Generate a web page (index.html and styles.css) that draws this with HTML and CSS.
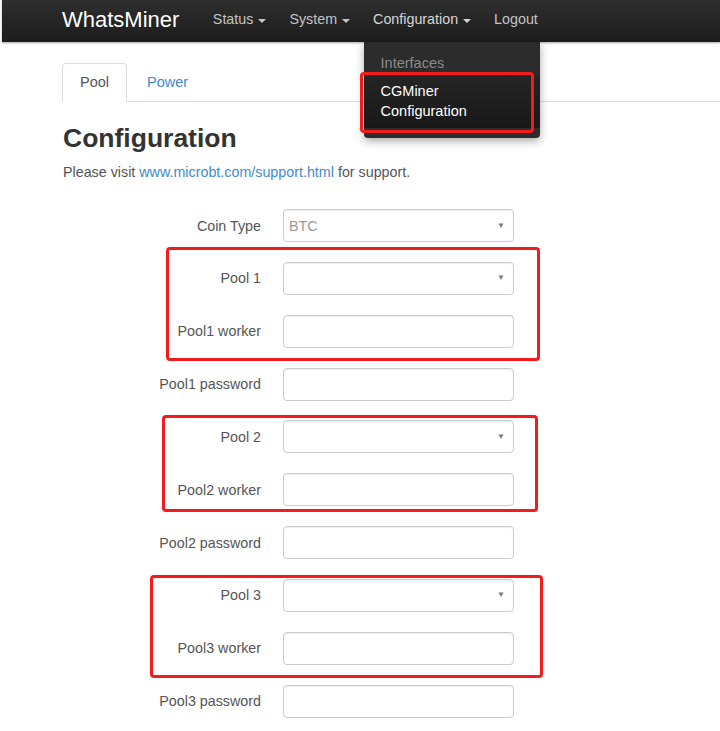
FILE: index.html
```html
<!DOCTYPE html>
<html>
<head>
<meta charset="utf-8">
<title>WhatsMiner - Configuration</title>
<link rel="stylesheet" href="styles.css">
</head>
<body>
<div class="page">
  <header class="navbar">
    <span class="brand">WhatsMiner</span>
    <ul class="nav">
      <li class="nav-item">Status<span class="caret"></span></li>
      <li class="nav-item">System<span class="caret"></span></li>
      <li class="nav-item open">Configuration<span class="caret"></span>
        <div class="dropdown">
          <div class="dd-item dd-muted">Interfaces</div>
          <div class="dd-item dd-active">CGMiner<br>Configuration</div>
        </div>
      </li>
      <li class="nav-item">Logout</li>
    </ul>
  </header>

  <main class="content">
    <ul class="tabs">
      <li class="tab active">Pool</li>
      <li class="tab">Power</li>
    </ul>

    <h1 class="title">Configuration</h1>
    <p class="lead">Please visit <a class="link" href="#">www.microbt.com/support.html</a> for support.</p>

    <form class="form">
      <label class="label">Coin Type</label>
      <div class="field select"><span class="value">BTC</span><span class="arrow">▼</span></div>

      <label class="label">Pool 1</label>
      <div class="field select"><span class="value"></span><span class="arrow">▼</span></div>
      <label class="label">Pool1 worker</label>
      <div class="field"></div>
      <label class="label">Pool1 password</label>
      <div class="field"></div>

      <label class="label">Pool 2</label>
      <div class="field select"><span class="value"></span><span class="arrow">▼</span></div>
      <label class="label">Pool2 worker</label>
      <div class="field"></div>
      <label class="label">Pool2 password</label>
      <div class="field"></div>

      <label class="label">Pool 3</label>
      <div class="field select"><span class="value"></span><span class="arrow">▼</span></div>
      <label class="label">Pool3 worker</label>
      <div class="field"></div>
      <label class="label">Pool3 password</label>
      <div class="field"></div>
    </form>
  </main>

  <div class="mark mark-menu"></div>
  <div class="mark mark-pool1"></div>
  <div class="mark mark-pool2"></div>
  <div class="mark mark-pool3"></div>
</div>
</body>
</html>
```

FILE: styles.css
```css
* { box-sizing: border-box; }

html, body {
  margin: 0;
  padding: 0;
  background: #fff;
}

body {
  font-family: "Liberation Sans", Arial, sans-serif;
  font-size: 14px;
  line-height: 20px;
  color: #555;
}

.page {
  position: relative;
  width: 720px;
  height: 731px;
  overflow: hidden;
}

/* Navbar */
.navbar {
  height: 42px;
  margin-left: 2px;
  display: flex;
  align-items: center;
  padding-left: 60px;
  padding-bottom: 3px;
  background: linear-gradient(#2e2e2e, #1c1c1c);
  box-shadow: 0 1px 2px rgba(0,0,0,0.35);
}

.brand {
  font-size: 22px;
  color: #fff;
  margin-right: 22px;
}

.nav {
  display: flex;
  list-style: none;
  margin: 0;
  padding: 0;
  height: 39px;
  align-items: center;
}

.nav-item {
  position: relative;
  padding: 0 11.5px;
  font-size: 14.3px;
  color: #c4c4c4;
  line-height: 39px;
  display: flex;
  align-items: center;
}

.nav-item.open { color: #d6d6d6; }

.caret {
  display: inline-block;
  width: 0;
  height: 0;
  margin-left: 5px;
  margin-top: 2px;
  border-top: 4px solid currentColor;
  border-left: 4px solid transparent;
  border-right: 4px solid transparent;
}

.dropdown {
  position: absolute;
  top: 42px;
  left: 2px;
  width: 176px;
  padding: 10px 0 10px;
  background: #2c2c2c;
  box-shadow: 0 3px 8px rgba(0,0,0,0.35);
  border-radius: 0 0 4px 4px;
  z-index: 5;
}

.dd-item {
  padding: 1px 17px;
  font-size: 14.5px;
  line-height: 20px;
  color: #fff;
}

.dd-muted {
  color: #8a8a8a;
}

.dd-active {
  margin-top: 2px;
  padding: 5px 17px 7px;
  background: linear-gradient(#252525, #181818);
}

/* Content */
.content {
  padding-left: 62px;
}

.tabs {
  list-style: none;
  display: flex;
  margin: 21px 0 0;
  padding: 0;
  border-bottom: 1px solid #ddd;
}

.tab {
  margin-right: 2px;
  margin-bottom: -1px;
  padding: 8px 17px 9px;
  border: 1px solid transparent;
  border-radius: 4px 4px 0 0;
  font-size: 14.5px;
  line-height: 20px;
  color: #428bca;
}

.tab.active {
  color: #555;
  background: #fff;
  border-color: #ddd #ddd transparent;
}

.title {
  margin: 21px 0 0 1px;
  font-size: 26.5px;
  line-height: 30px;
  font-weight: bold;
  color: #333;
}

.lead {
  margin: 9px 0 0 1px;
  font-size: 14.3px;
  line-height: 20px;
  color: #555;
}

.link {
  color: #428bca;
  text-decoration: none;
}

/* Form */
.form {
  margin-top: 27px;
  display: grid;
  grid-template-columns: 199px 231px;
  column-gap: 22px;
  row-gap: 19.85px;
  align-items: center;
}

.label {
  text-align: right;
  font-size: 14.3px;
  color: #555;
}

.field {
  height: 33px;
  border: 1px solid #ccc;
  border-radius: 4px;
  background: #fff;
  box-shadow: inset 0 1px 1px rgba(0,0,0,0.075);
}

.select {
  display: flex;
  align-items: center;
  justify-content: space-between;
  padding: 0 8px 0 5px;
}

.value {
  color: #999;
  font-size: 14.3px;
}

.arrow {
  font-size: 8px;
  color: #777;
}

/* Annotation highlight boxes */
.mark {
  position: absolute;
  border: 3px solid #f21c1c;
  border-radius: 4px;
  pointer-events: none;
  z-index: 10;
}

.mark-menu { left: 360px; top: 72px; width: 174px; height: 61px; }
.mark-pool1 { left: 166px; top: 247px; width: 374px; height: 114px; }
.mark-pool2 { left: 162px; top: 415px; width: 376px; height: 97px; }
.mark-pool3 { left: 150px; top: 575px; width: 393px; height: 103px; }
```
